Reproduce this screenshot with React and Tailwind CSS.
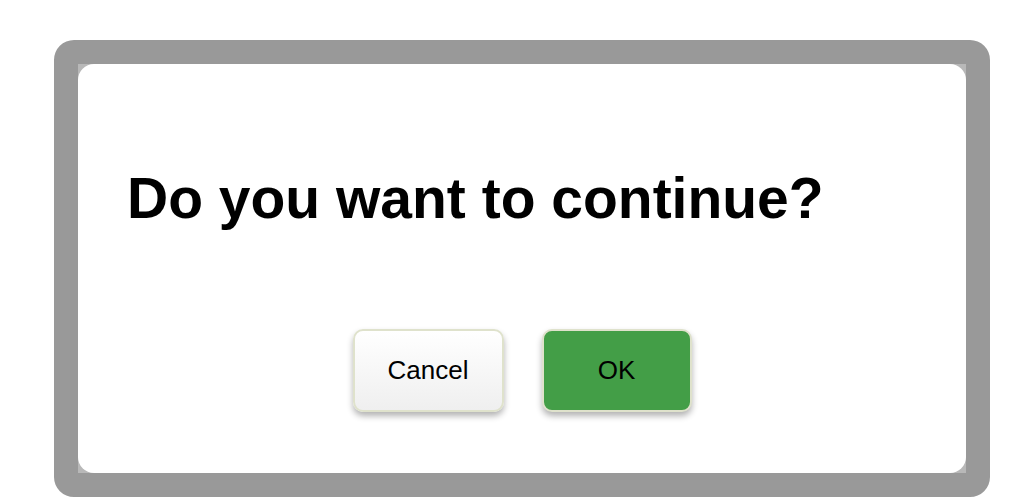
const App = () => {
  return (
    <div className="w-[1034px] h-[504px] bg-white pt-[40px] pl-[54px]" style={{ fontFamily: '"Liberation Sans", Arial, sans-serif' }}>
      <div className="w-[936px] h-[457px] rounded-[20px] border-[24px] border-[#999999] bg-[#b8b8b8]">
        <div className="h-full bg-white rounded-[16px] flex flex-col">
          <h1 className="pt-[101px] pl-[49px] text-[57px] leading-[66px] font-bold text-black">Do you want to continue?</h1>
          <div className="mt-[98px] flex justify-center gap-[38px]">
            <button className="w-[151px] h-[83px] rounded-[10px] border-2 border-[#dfe2cc] bg-gradient-to-b from-white to-[#efefef] shadow-[0_4px_6px_rgba(0,0,0,0.3)] text-[26px] text-black">Cancel</button>
            <button className="w-[150px] h-[83px] rounded-[10px] border-2 border-[#dfe2cc] bg-[#439e47] shadow-[0_4px_6px_rgba(0,0,0,0.3)] text-[26px] text-black">OK</button>
          </div>
        </div>
      </div>
    </div>
  );
};

export default App;
